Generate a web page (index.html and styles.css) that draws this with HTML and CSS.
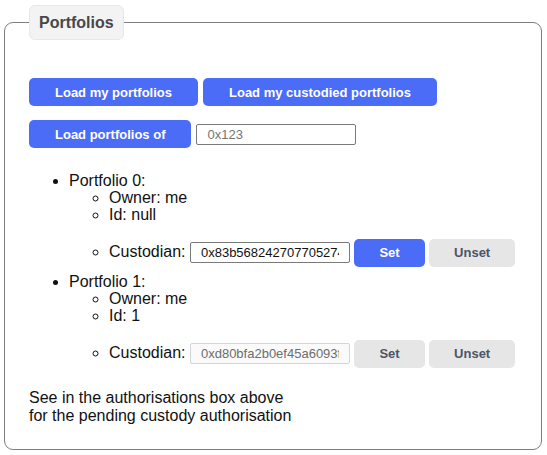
FILE: index.html
```html
<!DOCTYPE html>
<html>
<head>
<meta charset="utf-8">
<link rel="stylesheet" href="styles.css">
</head>
<body>
<fieldset class="box">
  <legend class="box-title">Portfolios</legend>
  <div class="btn-row first">
    <button class="btn primary">Load my portfolios</button>
    <button class="btn primary">Load my custodied portfolios</button>
  </div>
  <div class="btn-row">
    <button class="btn primary">Load portfolios of</button>
    <input class="field" type="text" placeholder="0x123">
  </div>
  <ul class="portfolios">
    <li>Portfolio 0:
      <ul class="details">
        <li>Owner: me</li>
        <li>Id: null</li>
        <li class="cust">Custodian: <input class="field" type="text" value="0x83b5682427077052740c3eb4c4c5a1c8b0c9d0e1"> <button class="btn primary small">Set</button> <button class="btn muted small">Unset</button></li>
      </ul>
    </li>
    <li>Portfolio 1:
      <ul class="details">
        <li>Owner: me</li>
        <li>Id: 1</li>
        <li class="cust">Custodian: <input class="field" type="text" value="0xd80bfa2b0ef45a6093f1c2d3e4f5a6b7c8d9e0f1" disabled> <button class="btn muted small">Set</button> <button class="btn muted small">Unset</button></li>
      </ul>
    </li>
  </ul>
  <div class="note">See in the authorisations box above<br>for the pending custody authorisation</div>
</fieldset>
</body>
</html>
```
FILE: styles.css
```css
html, body {
  margin: 0;
  padding: 0;
  background: #fff;
}
body {
  font-family: "Liberation Sans", Arial, sans-serif;
  font-size: 16px;
  line-height: 17px;
  color: #111;
}
.box {
  margin: 5px 5px 0 4px;
  padding: 38px 24px 24px 24px;
  border: 1px solid #7e7e7e;
  border-radius: 9px;
  min-width: 0;
}
.box-title {
  background: #f3f3f3;
  border: 1px solid #e8e8e8;
  border-radius: 6px;
  padding: 8px 9px;
  font-weight: bold;
  font-size: 16px;
  line-height: 17px;
  color: #474747;
}
.btn-row {
  display: flex;
  align-items: center;
  gap: 5px;
}
.btn-row.first {
  margin-bottom: 14px;
}
.btn {
  height: 28px;
  padding: 0 26px;
  border: none;
  border-radius: 5px;
  font-family: "Liberation Sans", Arial, sans-serif;
  font-weight: bold;
  font-size: 13px;
  cursor: pointer;
}
.btn.primary {
  background: #4a6cf6;
  color: #fff;
}
.btn.muted {
  background: #e6e6e6;
  color: #4a5568;
}
.btn.small {
  padding: 0 25px;
  vertical-align: middle;
}
.field {
  box-sizing: border-box;
  width: 160px;
  height: 21px;
  padding: 0 10px;
  border: 1px solid #7a7a7a;
  border-radius: 2px;
  font-family: "Liberation Sans", Arial, sans-serif;
  font-size: 13px;
  color: #111;
  background: #fff;
  vertical-align: middle;
}
.field::placeholder {
  color: #757575;
}
.field:disabled {
  border-color: #d4d4d4;
  background: #fafafa;
  color: #6d6d6d;
}
.portfolios {
  margin: 24px 0 21px 0;
  padding-left: 40px;
}
.details {
  margin: 0;
  padding-left: 40px;
  list-style: circle;
}
.cust {
  margin: 15px 0 6px 0;
  line-height: 28px;
  white-space: nowrap;
}
.note {
  line-height: 18px;
}
```
